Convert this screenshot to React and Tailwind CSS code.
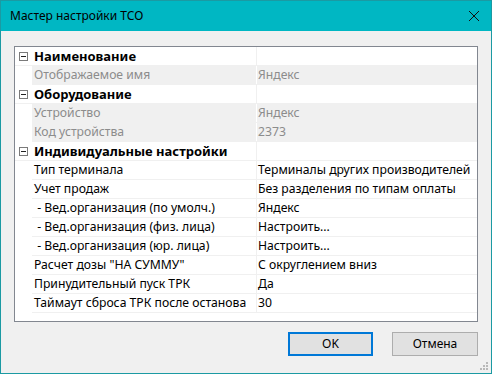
import React from "react";

const rows = [
  { type: "group", name: "Наименование" },
  { type: "ro", name: "Отображаемое имя", value: "Яндекс" },
  { type: "group", name: "Оборудование" },
  { type: "ro", name: "Устройство", value: "Яндекс" },
  { type: "ro", name: "Код устройства", value: "2373" },
  { type: "group", name: "Индивидуальные настройки" },
  { type: "row", name: "Тип терминала", value: "Терминалы других производителей" },
  { type: "row", name: "Учет продаж", value: "Без разделения по типам оплаты" },
  { type: "row", name: " - Вед.организация (по умолч.)", value: "Яндекс" },
  { type: "row", name: " - Вед.организация (физ. лица)", value: "Настроить..." },
  { type: "row", name: " - Вед.организация (юр. лица)", value: "Настроить..." },
  { type: "row", name: 'Расчет дозы "НА СУММУ"', value: "С округлением вниз" },
  { type: "row", name: "Принудительный пуск ТРК", value: "Да" },
  { type: "row", name: "Таймаут сброса ТРК после останова", value: "30" },
];

const MinusBox = () => (
  <div className="w-[9px] h-[9px] border border-[#7a7a7a] bg-white flex items-center justify-center">
    <div className="w-[5px] h-px bg-[#222]" />
  </div>
);

const Row = ({ row }) => {
  if (row.type === "group") {
    return (
      <div className="flex h-[19px] border-b border-[#f0f0f0]">
        <div className="w-[17px] flex items-center justify-center">
          <MinusBox />
        </div>
        <div className="w-[224px] pl-[2px] font-bold text-[13px] text-black leading-[18px]">
          {row.name}
        </div>
        <div className="w-px bg-[#f0f0f0]" />
        <div className="flex-1" />
      </div>
    );
  }
  const ro = row.type === "ro";
  return (
    <div className="flex h-[19px]">
      <div className="w-[17px]" />
      <div
        className={
          "flex flex-1 border-b border-[#f0f0f0] text-[12.2px] " +
          (ro ? "bg-[#f0f0f0] text-[#8c8c8c]" : "bg-white text-black")
        }
      >
        <div className="w-[224px] pl-[2px] whitespace-pre leading-[18px]">{row.name}</div>
        <div className={"w-px " + (ro ? "bg-white" : "bg-[#f0f0f0]")} />
        <div className="flex-1 pl-[1px] whitespace-pre leading-[18px]">{row.value}</div>
      </div>
    </div>
  );
};

export default function App() {
  return (
    <div
      className="w-[492px] h-[374px] border border-[#1b9aa3] flex flex-col bg-[#f0f0f0] text-[12px]"
      style={{ fontFamily: '"Noto Sans", "Open Sans", sans-serif' }}
    >
      <div className="h-[30px] bg-[#00b7c3] flex items-center justify-between pl-[9px] pr-[10px]">
        <span className="text-[12px] text-black">Мастер настройки ТСО</span>
        <svg width="12" height="12" viewBox="0 0 12 12" className="mr-[1px]">
          <path d="M1 1 L11 11 M11 1 L1 11" stroke="#111" strokeWidth="1" />
        </svg>
      </div>

      <div className="flex-1 flex flex-col px-[13px] pt-[15px]">
        <div className="h-[276px] border border-[#828790] bg-white flex flex-col">
          {rows.map((r, i) => (
            <Row key={i} row={r} />
          ))}
        </div>

        <div className="flex justify-end gap-[19px] mt-[10px]">
          <button className="w-[85px] h-[24px] border-2 border-[#0078d7] bg-[#e1e1e1] text-[12px] text-black">
            OK
          </button>
          <button className="w-[86px] h-[24px] border border-[#adadad] bg-[#e1e1e1] text-[12px] text-black">
            Отмена
          </button>
        </div>

        <div className="flex-1 flex items-end justify-end pb-[2px] -mr-[11px]">
          <svg width="10" height="10" viewBox="0 0 10 10">
            <g fill="#b8b8b8">
              <rect x="7" y="1" width="2" height="2" />
              <rect x="4" y="4" width="2" height="2" />
              <rect x="7" y="4" width="2" height="2" />
              <rect x="1" y="7" width="2" height="2" />
              <rect x="4" y="7" width="2" height="2" />
              <rect x="7" y="7" width="2" height="2" />
            </g>
          </svg>
        </div>
      </div>
    </div>
  );
}
